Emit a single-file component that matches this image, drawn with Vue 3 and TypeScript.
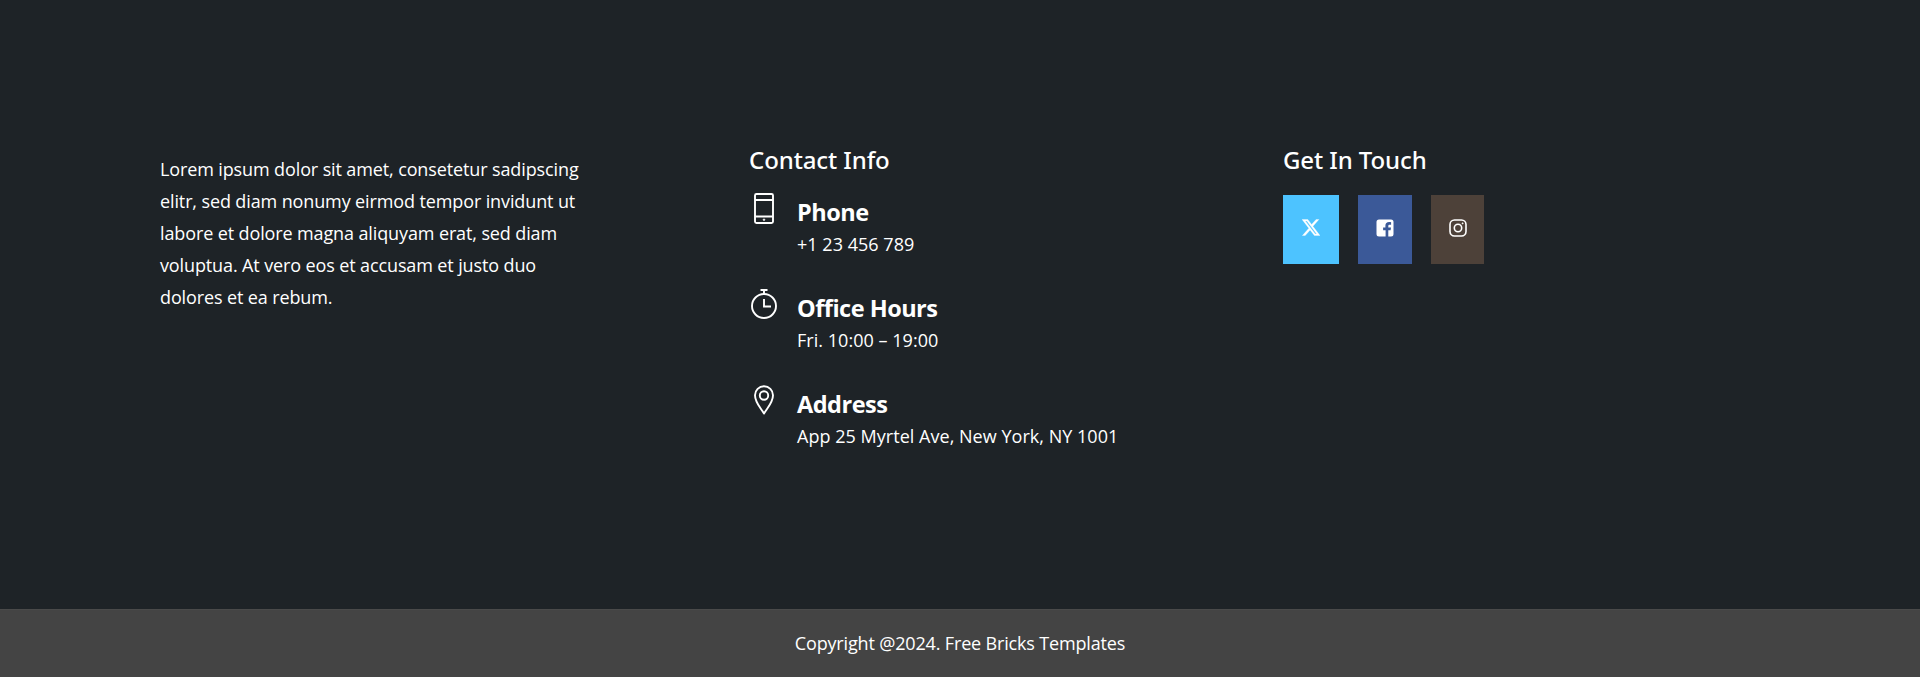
<script setup lang="ts">
const items = [
  { key: 'phone', title: 'Phone', text: '+1 23 456 789' },
  { key: 'clock', title: 'Office Hours', text: 'Fri. 10:00 – 19:00' },
  { key: 'pin', title: 'Address', text: 'App 25 Myrtel Ave, New York, NY 1001' },
]
</script>

<template>
  <div class="page">
    <section class="main">
      <div class="about">
        <p>Lorem ipsum dolor sit amet, consetetur sadipscing elitr, sed diam nonumy eirmod tempor invidunt ut labore et dolore magna aliquyam erat, sed diam voluptua. At vero eos et accusam et justo duo dolores et ea rebum.</p>
      </div>
      <div class="contact">
        <h3>Contact Info</h3>
        <div v-for="item in items" :key="item.key" class="item">
          <svg class="icon" viewBox="0 0 30 32" fill="none" stroke="#fff" stroke-width="1.9">
            <template v-if="item.key === 'phone'">
              <rect x="6" y="2" width="18" height="29" rx="1.5" />
              <path d="M6 8h18M6 24.500h18" />
              <circle cx="15" cy="27.700" r=".8" fill="#fff" stroke-width=".8" />
            </template>
            <template v-else-if="item.key === 'clock'">
              <circle cx="15" cy="18" r="12" />
              <path d="M11.500 2h7M15 2v4M15 11v7.500h7" />
            </template>
            <template v-else>
              <path d="M15 29.500C11.500 23.500 6 18.500 6 11.200a9 9 0 0 1 18 0C24 18.500 18.500 23.500 15 29.500Z" stroke-linejoin="round" />
              <circle cx="15" cy="11.500" r="4.200" />
            </template>
          </svg>
          <div class="body">
            <h4>{{ item.title }}</h4>
            <p>{{ item.text }}</p>
          </div>
        </div>
      </div>
      <div class="touch">
        <h3>Get In Touch</h3>
        <div class="socials">
          <a class="social x">
            <svg width="18" height="17" viewBox="0 0 512 462" fill="#fff" stroke="#fff" stroke-width="10"><path d="M403 0h78L310 196l201 266H354L231 301 90 462H12l183-209L2 0h161l111 147L403 0Zm-27 415h43L139 44H93l283 371Z" /></svg>
          </a>
          <a class="social fb">
            <svg width="18" height="18" viewBox="0 0 18 18"><path fill="#fff" d="M3 .5h12A2.500 2.500 0 0 1 17.500 3v12a2.500 2.500 0 0 1-2.500 2.500h-2.700v-6.300h2.300l.4-2.700h-2.700V7c0-.8.400-1.300 1.400-1.300h1.400V3.300c-.6-.1-1.300-.2-2-.2-2.300 0-3.700 1.300-3.700 3.700v1.700H7.100v2.700h2.500v6.300H3A2.500 2.500 0 0 1 .5 15V3A2.500 2.500 0 0 1 3 .5Z" /></svg>
          </a>
          <a class="social ig">
            <svg width="18" height="18" viewBox="0 0 18 18" fill="none" stroke="#fff" stroke-width="1.600"><rect x="1" y="1" width="16" height="16" rx="4.500" /><circle cx="9" cy="9" r="3.700" /><circle cx="13.600" cy="4.400" r=".6" fill="#fff" stroke-width=".6" /></svg>
          </a>
        </div>
      </div>
    </section>
    <footer class="copy">Copyright @2024. Free Bricks Templates</footer>
  </div>
</template>

<style>
html, body { margin: 0; background: #1e2327; }
</style>

<style scoped>
.page {
  height: 677px;
  display: flex;
  flex-direction: column;
  font-family: "Open Sans", "Noto Sans", sans-serif;
  color: #fff;
  background: #1e2327;
  overflow: hidden;
}
.main {
  flex: 1;
  display: grid;
  grid-template-columns: 589px 534px 1fr;
  padding: 144px 160px 0;
}
.about p {
  margin: 9px 0 0;
  width: 430px;
  font-size: 18px;
  line-height: 32px;
  letter-spacing: -0.12px;
}
h3 {
  margin: 0;
  font-family: "Noto Sans", sans-serif;
  font-size: 24px;
  line-height: 32px;
  font-weight: 500;
  letter-spacing: -0.1px;
}
.item {
  display: flex;
  gap: 18px;
  height: 96px;
}
.contact h3 { margin-bottom: 16px; }
.icon {
  width: 30px;
  height: 32px;
  flex: none;
}
.body { padding-top: 4px; }
h4 {
  margin: 0 0 1px;
  font-size: 23.500px;
  line-height: 32px;
  font-weight: 700;
  letter-spacing: -0.5px;
}
.body p {
  margin: 0;
  font-size: 18px;
  line-height: 31.500px;
  letter-spacing: 0.03px;
}
.socials {
  display: flex;
  gap: 19px;
  margin-top: 19px;
}
.social {
  height: 69px;
  display: flex;
  align-items: center;
  justify-content: center;
  padding-bottom: 4px;
  box-sizing: border-box;
}
.x { width: 56px; background: #4dc3ff; }
.fb { width: 54px; background: #3b5998; }
.ig { width: 53px; background: #4d4139; }
.copy {
  height: 68px;
  background: #444;
  border-top: 1px solid #4a4a4a;
  box-sizing: border-box;
  display: flex;
  align-items: center;
  justify-content: center;
  font-size: 18px;
  letter-spacing: -0.16px;
  padding-bottom: 2px;
}
</style>
